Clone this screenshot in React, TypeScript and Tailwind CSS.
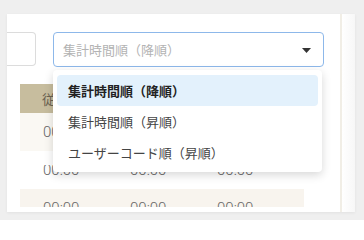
import { useState } from "react";

const options = ["集計時間順（降順）", "集計時間順（昇順）", "ユーザーコード順（昇順）"];

const rows = [
  { bg: "bg-[#faf8f3]", clip: "", cells: ["00:00", "00:00", "00:00"] },
  { bg: "bg-white", clip: "[clip-path:inset(14px_0_0_0)]", cells: ["00:00", "00:00", "00:00"] },
  { bg: "bg-[#f8f4ee]", clip: "", cells: ["00:00", "00:00", "00:00"] },
];

const App = () => {
  const [selected] = useState(0);

  return (
    <div
      className="w-[364px] h-[220px] bg-[#efefef] pt-[14px] pl-[7px] overflow-hidden"
      style={{ fontFamily: '"Noto Sans CJK JP", "Noto Sans", sans-serif' }}
    >
      {/* Card */}
      <div className="relative w-[348px] h-[198px] bg-white shadow-[0_1px_3px_rgba(0,0,0,0.06)] overflow-hidden">
        <div className="flex h-full">
          <div className="w-[333px] flex flex-col">
            {/* Filter row */}
            <div className="flex items-start pt-[18px]">
              <div className="w-[29px] h-[34px] border border-l-0 border-[#dcdcdc] rounded-r-[4px]" />
              <div className="relative ml-[17px] w-[271px] h-[35px] border-[1.5px] border-[#8db8ea] rounded-[4px] flex items-center pl-[9px] pr-[12px]">
                <span className="text-[13px] text-[#b3b3b3] flex-1">集計時間順（降順）</span>
                <svg width="9" height="5" viewBox="0 0 9 5" className="mt-[2px]">
                  <path d="M0 0h9L4.5 5z" fill="#333" />
                </svg>
              </div>
            </div>

            {/* Table */}
            <div className="mt-[17px] ml-[13px] w-[284px] h-[123px] overflow-hidden">
              <div className="h-[29px] bg-[#c7bd9e] flex items-center pl-[22px] text-[13px] text-[#6b6251]">
                従業員コード
              </div>
              {rows.map((r, i) => (
                <div key={i} className={`h-[38px] ${r.bg}`}>
                  <div className={`h-full grid grid-cols-[87px_87px_87px_23px] items-center ${r.clip}`}>
                    {r.cells.map((c, j) => (
                      <span
                        key={j}
                        className="pl-[23px] text-[15px] text-[#666] font-light"
                        style={{ fontFamily: "Roboto, sans-serif" }}
                      >
                        {c}
                      </span>
                    ))}
                  </div>
                </div>
              ))}
            </div>
          </div>
          {/* Side track */}
          <div className="w-[15px] h-full border-l-[2px] border-[#f1eee6] bg-gradient-to-r from-white to-[#f7f7f7]" />
        </div>

        {/* Dropdown menu */}
        <div className="absolute left-[46px] top-[56px] w-[269px] bg-white rounded-[4px] shadow-[0_3px_10px_rgba(0,0,0,0.16)] pt-[5px] pb-[4px] px-[4px]">
          {options.map((o, i) => (
            <div
              key={o}
              className={`h-[31px] flex items-center pl-[11px] rounded-[4px] text-[13px] ${
                i === selected ? "bg-[#e3f1fc] font-bold text-[#222]" : "text-[#444]"
              }`}
            >
              {o}
            </div>
          ))}
        </div>
      </div>
    </div>
  );
};

export default App;
